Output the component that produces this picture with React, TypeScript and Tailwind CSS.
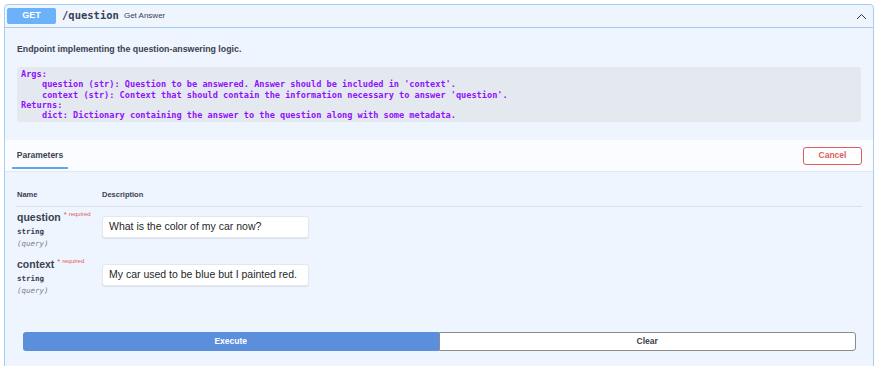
import React from 'react';

const sans = "font-['Liberation_Sans',Arial,sans-serif]";
const mono = "font-['DejaVu_Sans_Mono','Liberation_Mono',monospace]";

const docLines = [
  { text: 'Args:', indent: false },
  { text: "question (str): Question to be answered. Answer should be included in 'context'.", indent: true },
  { text: "context (str): Context that should contain the information necessary to answer 'question'.", indent: true },
  { text: 'Returns:', indent: false },
  { text: 'dict: Dictionary containing the answer to the question along with some metadata.', indent: true },
];

const params = [
  { name: 'question', value: 'What is the color of my car now?' },
  { name: 'context', value: 'My car used to be blue but I painted red.' },
];

const App: React.FC = () => {
  return (
    <div className={`w-full h-[366px] overflow-hidden bg-white pt-[4px] pl-[4px] ${sans}`}>
      <div className="w-[870px] h-[400px] border border-[#a9cdf2] rounded-[4px] bg-[#eef5fe]">
        {/* header */}
        <div className="h-[23px] flex items-center pl-[2px] pr-[6px] border-b border-[#a9cdf2]">
          <div className="w-[49px] h-[16px] rounded-[2px] bg-[#6cb2fa] text-white text-[9px] font-bold flex items-center justify-center">
            GET
          </div>
          <span className={`ml-[6px] text-[10.5px] font-bold text-[#3b4151] ${mono}`}>/question</span>
          <span className="ml-[5px] text-[8px] text-[#3b4151]">Get Answer</span>
          <svg className="ml-auto" width="11" height="7" viewBox="0 0 11 7" fill="none">
            <path d="M1 6 L5.5 1.5 L10 6" stroke="#333" strokeWidth="1" />
          </svg>
        </div>

        {/* description */}
        <div className="pt-[15px] px-[12px]">
          <p className="text-[8.8px] leading-[12px] font-bold text-[#3b4151]">
            Endpoint implementing the question-answering logic.
          </p>
          <pre className={`mt-[12px] h-[55px] pt-[2px] px-[4px] rounded-[3px] bg-[#e4e9f0] text-[#9012fe] text-[8.6px] leading-[10.3px] font-semibold ${mono}`}>
            {docLines.map((l, i) => (
              <div key={i} className={l.indent ? 'pl-[21px]' : ''}>{l.text}</div>
            ))}
          </pre>
        </div>

        {/* parameters header */}
        <div className="mt-[18px] h-[32px] bg-[#fafcff] border-b border-[#dfe7ef] flex items-end justify-between pl-[7px] pr-[11px]">
          <div className="w-[56px] pb-[2px] flex flex-col items-center">
            <span className="text-[8.5px] font-bold text-[#3b4151] leading-[10px] mb-[7px]">Parameters</span>
            <div className="w-full h-[2px] bg-[#61a6ec]" />
          </div>
          <button className="self-center w-[59px] h-[18px] rounded-[3px] border border-[#e05c5c] bg-white text-[#e05c5c] text-[8.5px] font-bold">
            Cancel
          </button>
        </div>

        {/* parameters table */}
        <div className="px-[11px]">
          <div className="flex items-center h-[35px] pt-[11px] border-b border-[#dbe1e8] text-[7.5px] font-bold text-[#3b4151]">
            <div className="w-[86px] pl-[1px]">Name</div>
            <div>Description</div>
          </div>

          {params.map((p, i) => (
            <div key={p.name} className={`flex ${i === 0 ? 'mt-[4px]' : 'mt-[8px]'}`}>
              <div className="w-[86px] pl-[1px]">
                <div className="flex items-start">
                  <span className="text-[10.5px] leading-[13px] font-bold text-[#3b4151]">{p.name}</span>
                  <span className="ml-[3px] text-[7.5px] leading-[8px] text-[#e05c5c]">*</span>
                  <span className="ml-[2px] text-[6px] leading-[7px] text-[#e05c5c]">required</span>
                </div>
                <div className={`mt-[2px] text-[7.5px] leading-[12px] font-semibold text-[#3b4151] ${mono}`}>string</div>
                <div className={`text-[7.5px] leading-[12px] italic text-[#7a7f88] ${mono}`}>(query)</div>
              </div>
              <div className={i === 0 ? 'mt-[5px]' : 'mt-[6px]'}>
                <div className="w-[207px] h-[22px] rounded-[3px] bg-white border border-[#e4e8ec] shadow-[0_1px_1px_rgba(0,0,0,0.08)] flex items-center pl-[6px] text-[10.5px] text-[#1f1f1f]">
                  {p.value}
                </div>
              </div>
            </div>
          ))}
        </div>

        {/* execute / clear */}
        <div className="mt-[35px] pl-[18px] pr-[17px] flex">
          <button className="flex-1 h-[19px] rounded-l-[3px] bg-[#5b8fdb] text-white text-[8.5px] font-bold">
            Execute
          </button>
          <button className="flex-1 h-[19px] rounded-r-[3px] bg-white border border-[#8c8c8c] text-[#3b4151] text-[8.5px] font-bold">
            Clear
          </button>
        </div>
      </div>
    </div>
  );
};

export default App;
